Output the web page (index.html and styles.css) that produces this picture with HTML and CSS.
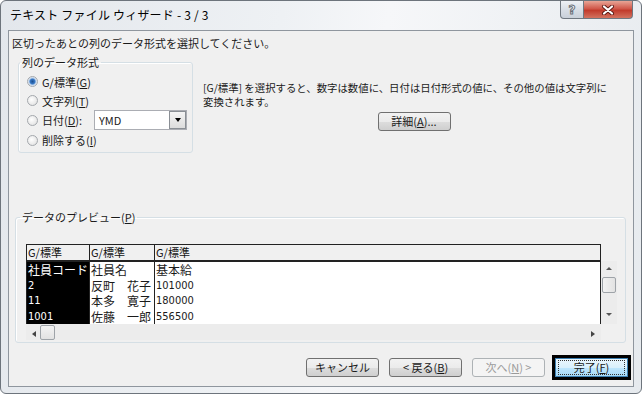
FILE: index.html
```html
<!DOCTYPE html>
<html lang="ja">
<head>
    <meta charset="UTF-8">
    <title>テキスト ファイル ウィザード - 3 / 3</title>
    <link rel="stylesheet" href="styles.css">
</head>
<body>
    <div class="window">
        <div class="titlebar">
            <span class="title">テキスト ファイル ウィザード - 3 / 3</span>
            <div class="caption-buttons">
                <span class="cap-btn help">?</span>
                <span class="cap-btn close">
                    <svg width="14" height="10" viewBox="0 0 14 10">
                        <path d="M3 1.5 L11 8.5 M11 1.5 L3 8.5" stroke="#5a1a14" stroke-width="4" stroke-linecap="round"/>
                        <path d="M3 1.5 L11 8.5 M11 1.5 L3 8.5" stroke="#fff" stroke-width="2.2" stroke-linecap="round"/>
                    </svg>
                </span>
            </div>
        </div>

        <div class="client">
            <p class="prompt">区切ったあとの列のデータ形式を選択してください。</p>

            <div class="top-row">
                <fieldset class="group format-group">
                    <legend>列のデータ形式</legend>
                    <div class="radio-row"><span class="radio checked"></span>G/標準(<u>G</u>)</div>
                    <div class="radio-row"><span class="radio"></span>文字列(<u>T</u>)</div>
                    <div class="radio-row date-row">
                        <span class="radio"></span>日付(<u>D</u>):
                        <div class="combo">YMD<span class="combo-btn"><i class="arrow-down"></i></span></div>
                    </div>
                    <div class="radio-row"><span class="radio"></span>削除する(<u>I</u>)</div>
                </fieldset>

                <div class="description">
                    <p>[G/標準] を選択すると、数字は数値に、日付は日付形式の値に、その他の値は文字列に</p>
                    <p>変換されます。</p>
                    <button class="btn detail-btn">詳細(<u>A</u>)...</button>
                </div>
            </div>

            <fieldset class="group preview-group">
                <legend>データのプレビュー(<u>P</u>)</legend>
                <div class="preview">
                    <div class="preview-main">
                        <div class="sheet">
                            <div class="sheet-row head"><span>G/標準</span><span>G/標準</span><span>G/標準</span></div>
                            <div class="sheet-body">
                                <div class="sheet-row"><span class="jp">社員コード</span><span class="jp">社員名</span><span class="jp">基本給</span></div>
                                <div class="sheet-row"><span>2</span><span class="jp">反町　花子</span><span>101000</span></div>
                                <div class="sheet-row"><span>11</span><span class="jp">本多　寛子</span><span>180000</span></div>
                                <div class="sheet-row"><span>1001</span><span class="jp">佐藤　一郎</span><span>556500</span></div>
                            </div>
                        </div>
                        <div class="vscroll">
                            <i class="arrow-up small"></i>
                            <span class="thumb v-thumb"></span>
                            <i class="arrow-down small"></i>
                        </div>
                    </div>
                    <div class="hscroll">
                        <i class="arrow-left"></i>
                        <span class="thumb h-thumb"></span>
                        <i class="arrow-right"></i>
                    </div>
                </div>
            </fieldset>

            <div class="button-row">
                <button class="btn">キャンセル</button>
                <button class="btn">&lt; 戻る(<u>B</u>)</button>
                <button class="btn" disabled>次へ(<u>N</u>) &gt;</button>
                <button class="btn default"><span class="focus">完了(<u>F</u>)</span></button>
            </div>
        </div>
    </div>
</body>
</html>
```

FILE: styles.css
```css
* { box-sizing: border-box; }
body {
    margin: 0;
    background: #fff;
    font-family: "Noto Sans CJK JP", sans-serif;
    font-size: 11px;
    color: #1a1a1a;
}
.window {
    width: 642px;
    height: 394px;
    border: 1px solid #6d747c;
    border-radius: 6px;
    background: linear-gradient(100deg, #e3e7ec 0%, #eef1f4 40%, #f6f7f9 55%, #e6eaee 100%);
    display: flex;
    flex-direction: column;
}

/* title bar */
.titlebar { height: 29px; display: flex; justify-content: space-between; align-items: flex-start; padding-left: 9px; }
.title { font-size: 12px; line-height: 27px; color: #000; letter-spacing: 0.2px; }
.caption-buttons { display: flex; margin-right: 8px; }
.cap-btn { height: 18px; display: flex; align-items: center; justify-content: center; border: 1px solid #6f7780; border-top: none; }
.help {
    width: 24px;
    border-radius: 0 0 0 4px;
    background: linear-gradient(#eef1f5, #d8dee6 50%, #c9d0d9);
    font: bold 12px "DejaVu Sans", sans-serif;
    color: #fff;
    -webkit-text-stroke: 1px #6a7078;
}
.close {
    width: 49px;
    border-left: none;
    border-radius: 0 0 4px 0;
    background: linear-gradient(#e8a596, #d0584a 45%, #c13b2c 55%, #d3725f);
}

/* client area */
.client {
    flex: 1;
    margin: 0 7px 6px 7px;
    border: 1px solid #8f969e;
    background: #f0f0f0;
}
.prompt { margin: 0; padding: 5px 3px; line-height: 14px; }
.top-row { display: flex; height: 98px; }
.group {
    margin: 0;
    border: 1px solid #d5dfe5;
    border-radius: 3px;
    box-shadow: inset 1px 1px 0 #fff;
}
.group legend { padding: 0 2px; line-height: 14px; }
.format-group { margin-left: 9px; width: 175px; padding: 3px 5px 2px 8px; }
.format-group legend { margin-left: -7px; }
.radio-row { display: flex; align-items: center; height: 19px; }
.date-row, .radio-row:last-child { height: 20px; }
.radio {
    width: 11px;
    height: 11px;
    margin-right: 4px;
    border-radius: 50%;
    border: 1px solid #a4a8ad;
    background: radial-gradient(circle at 40% 40%, #fff, #dcdcdc);
}
.radio.checked { background: radial-gradient(circle, #1d4f8f 0, #3a7bc8 2.5px, #bcd2ec 3.5px, #f4f4f4 5px); }
.combo {
    margin-left: auto;
    width: 93px;
    height: 20px;
    border: 1px solid #abadb3;
    background: #fff;
    padding-left: 4px;
    line-height: 18px;
    display: flex;
    justify-content: space-between;
}
.combo-btn {
    width: 17px;
    height: 18px;
    border: 1px solid #8a8f95;
    background: linear-gradient(#f4f4f4, #dcdcdc);
    display: flex;
    align-items: center;
    justify-content: center;
}
.arrow-down { width: 0; height: 0; border: 3.5px solid transparent; border-top: 4px solid #000; border-bottom: none; }
.arrow-up { width: 0; height: 0; border: 3.5px solid transparent; border-bottom: 4px solid #000; border-top: none; }
.arrow-left { width: 0; height: 0; border: 3px solid transparent; border-right: 4px solid #444; border-left: none; }
.arrow-right { width: 0; height: 0; border: 3px solid transparent; border-left: 4px solid #444; border-right: none; }
.small { border-width: 3px; }
.arrow-up.small { border-top: none; border-bottom-color: #555; }
.arrow-down.small { border-bottom: none; border-top-color: #555; }

.description { margin-left: 10px; width: 422px; padding-top: 26px; }
.description p { margin: 0; height: 14px; line-height: 14px; font-size: 10.4px; white-space: nowrap; }
.detail-btn { display: block; margin: 3px auto 0; width: 73px; }

/* buttons */
.btn {
    height: 19px;
    width: 73px;
    padding: 0;
    border: 1px solid #707070;
    border-radius: 3px;
    background: linear-gradient(#f2f2f2, #ebebeb 50%, #dddddd 51%, #cfcfcf);
    font-family: inherit;
    font-size: 11px;
    color: #1a1a1a;
    line-height: 17px;
}
.btn:disabled { border-color: #adb2b5; background: #f4f4f4; color: #9a9a9a; }
.btn.default {
    border-color: #3c7fb1;
    background: linear-gradient(#eaf6fd, #d9f0fc 50%, #bee6fd 51%, #a7d9f5);
    box-shadow: 0 0 0 1px #000, 0 0 0 3px #000;
    border-radius: 0;
}
.focus { display: block; margin: 1px 2px; border: 1px dotted #333; line-height: 13px; }

/* preview */
.preview-group { margin: 57px 0 0 6px; width: 611px; padding: 20px 7px 2px 10px; }
.preview-group legend { margin-left: -6px; }
.preview { width: 591px; }
.preview-main { display: flex; }
.sheet { flex: 1; border: 1px solid #222; border-bottom: none; background: #fff; }
.sheet-row { display: grid; grid-template-columns: 63px 65px 1fr; height: 15.5px; line-height: 15px; }
.sheet-row span { padding-left: 1px; white-space: nowrap; font-family: "DejaVu Sans Condensed", "Noto Sans CJK JP", sans-serif; font-size: 11px; }
.sheet-row .jp { font-family: "Noto Sans CJK JP", sans-serif; font-size: 12px; }
.sheet-row span:not(:last-child) { border-right: 1px solid #222; }
.sheet-row span:first-child { background: #000; color: #fff; }
.sheet-row.head { height: 17px; border-bottom: 2px solid #222; line-height: 15px; }
.sheet-row.head span { background: #f0f0f0; color: #111; font-family: "Noto Sans CJK JP", sans-serif; }
.sheet-body { height: 62px; overflow: hidden; }
.vscroll {
    width: 16px;
    margin-top: 17px;
    background: #ececec;
    display: flex;
    flex-direction: column;
    align-items: center;
    justify-content: space-between;
    padding: 6px 0 8px;
}
.thumb {
    border: 1px solid #9ea3a8;
    border-radius: 2px;
    background: linear-gradient(90deg, #f3f3f3, #e2e2e2);
}
.v-thumb { width: 14px; height: 16px; margin-bottom: 14px; }
.hscroll {
    width: 575px;
    height: 16px;
    background: #ececec;
    display: flex;
    align-items: center;
    padding: 0 6px;
}
.h-thumb { width: 15px; height: 15px; margin-left: 4px; background: linear-gradient(#f3f3f3, #e2e2e2); }
.hscroll .arrow-right { margin-left: auto; margin-top: 4px; }
.hscroll .arrow-left { margin-top: 4px; }

.button-row { display: flex; justify-content: flex-end; gap: 10px; margin-top: 15px; padding-right: 5px; }
```
